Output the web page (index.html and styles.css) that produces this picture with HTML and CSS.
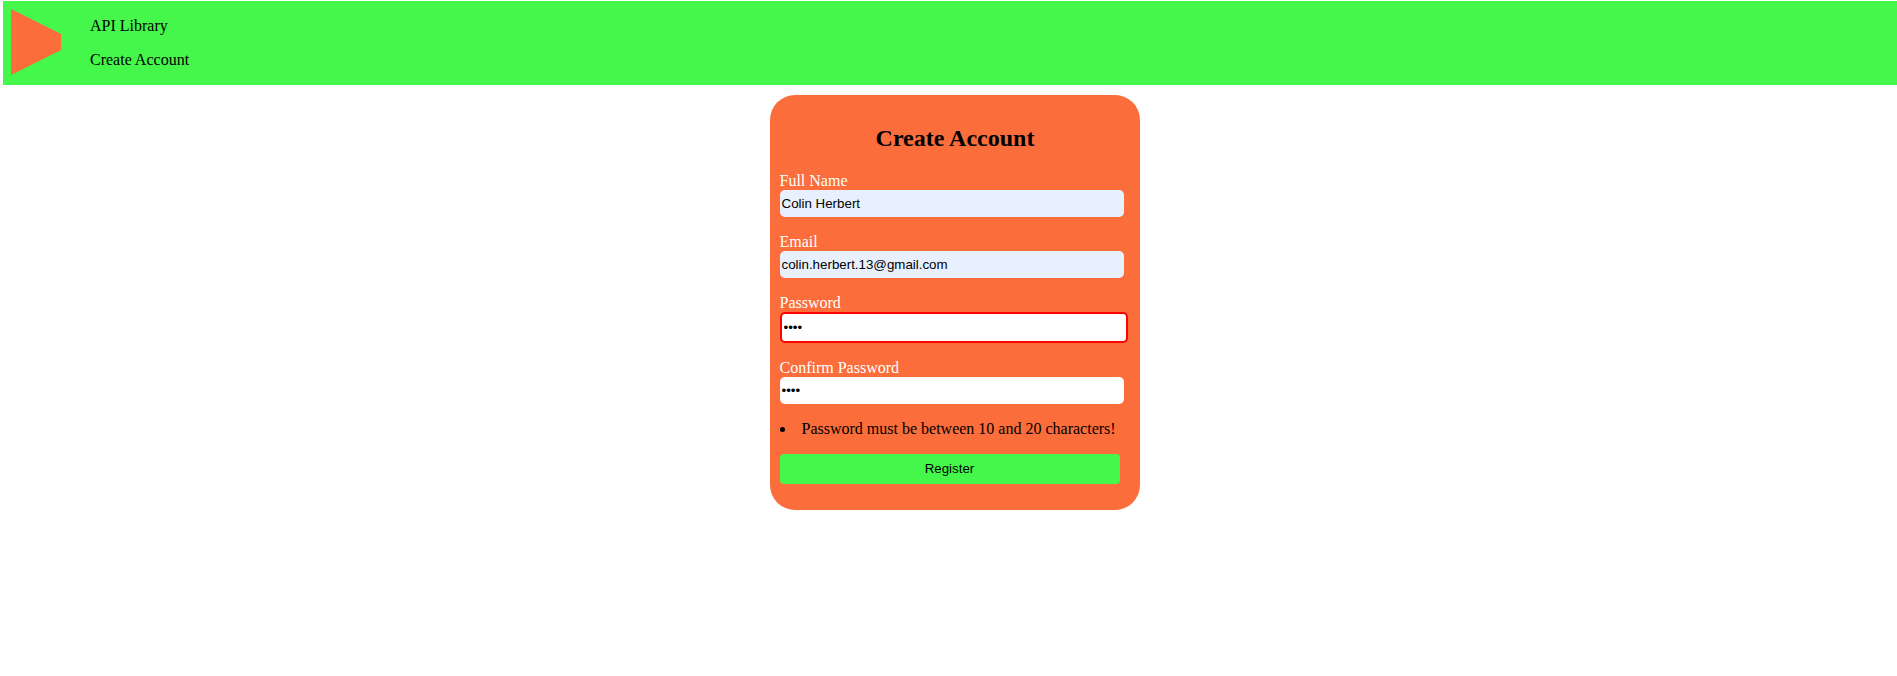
FILE: index.html
```html
<!DOCTYPE html>
<html lang="en">
<head>
<meta charset="utf-8">
<title>Create Account</title>
<link rel="stylesheet" href="styles.css">
</head>
<body>
<header class="navbar">
  <svg class="logo" width="50" height="66" viewBox="0 0 50 66"><path d="M0 0L50 25V41L0 66Z"/></svg>
  <nav class="links">
    <a>API Library</a>
    <a>Create Account</a>
  </nav>
</header>
<form class="card">
  <h2 class="title">Create Account</h2>
  <div class="field"><label for="name">Full Name</label><input class="input filled" id="name" type="text" value="Colin Herbert"></div>
  <div class="field"><label for="email">Email</label><input class="input filled" id="email" type="text" value="colin.herbert.13@gmail.com"></div>
  <div class="field"><label for="pw">Password</label><input class="input invalid" id="pw" type="password" value="1234"></div>
  <div class="field"><label for="pw2">Confirm Password</label><input class="input" id="pw2" type="password" value="1234"></div>
  <ul class="errors"><li>Password must be between 10 and 20 characters!</li></ul>
  <button class="register" type="button">Register</button>
</form>
</body>
</html>
```
FILE: styles.css
```css
body {
  margin: 0;
  padding: 1px 0 0 3px;
  font: 16px/18px "Liberation Serif", "Times New Roman", serif;
  color: #000;
  background: #fff;
}
.navbar {
  display: flex;
  box-sizing: border-box;
  height: 84px;
  padding: 8px;
  background: #44f74a;
}
.logo {
  fill: #fb6d3a;
}
.links {
  display: flex;
  flex-direction: column;
  gap: 16px;
  padding: 8px 0 0 29px;
}
.card {
  box-sizing: border-box;
  width: 370px;
  height: 415px;
  margin: 10px 0 0 767px;
  padding: 10px;
  border-radius: 25px;
  background: #fb6d3a;
}
.title {
  margin: 20px 0;
  font-size: 24px;
  line-height: 27px;
  text-align: center;
}
.field {
  display: flex;
  flex-direction: column;
  align-items: flex-start;
  margin-bottom: 16px;
}
.field label {
  margin-left: -0.5px;
  color: #fff;
}
.input {
  box-sizing: border-box;
  width: 344px;
  height: 27px;
  padding: 1px 2px 1px 1.5px;
  border: 0;
  border-radius: 5px;
  background: #fff;
  color: #000;
  font: 13.333px "Liberation Sans", Arial, sans-serif;
}
.filled {
  background: #e8f0fe;
}
.invalid {
  width: 348px;
  height: 31px;
  border: 2px solid #f00;
}
.errors {
  margin: 0 0 16px;
  padding: 0;
  list-style: disc inside;
}
.errors li {
  margin-left: -0.5px;
}
.register {
  display: block;
  width: 340px;
  height: 30px;
  padding: 0 1px 2px 0;
  border: 0;
  border-radius: 4px;
  background: #44f74a;
  color: #000;
  font: 13.333px "Liberation Sans", Arial, sans-serif;
}
```
